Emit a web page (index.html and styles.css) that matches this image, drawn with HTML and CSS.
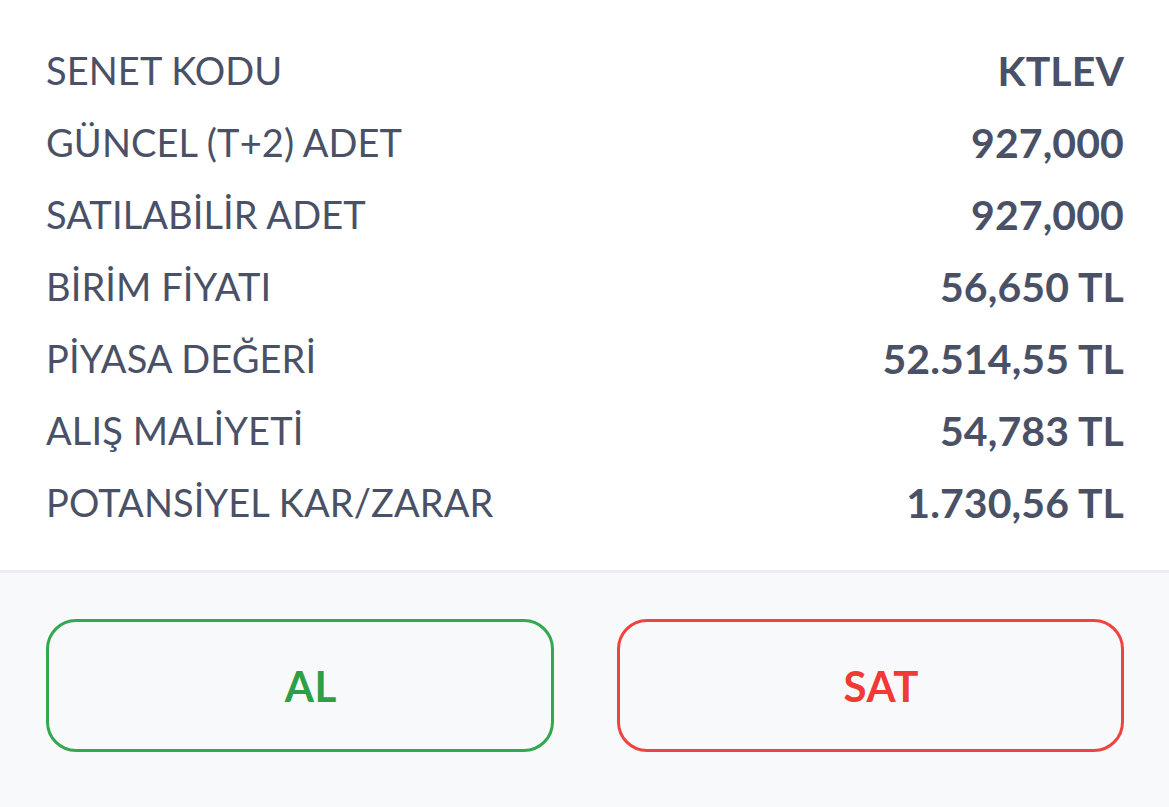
FILE: index.html
```html
<!DOCTYPE html>
<html lang="tr">
<head>
<meta charset="utf-8">
<link rel="stylesheet" href="styles.css">
</head>
<body>
<div class="page">
  <section class="details">
    <div class="row"><span class="label">SENET KODU</span><span class="value">KTLEV</span></div>
    <div class="row"><span class="label">GÜNCEL (T+2) ADET</span><span class="value">927,000</span></div>
    <div class="row"><span class="label">SATILABİLİR ADET</span><span class="value">927,000</span></div>
    <div class="row"><span class="label">BİRİM FİYATI</span><span class="value">56,650 TL</span></div>
    <div class="row"><span class="label">PİYASA DEĞERİ</span><span class="value">52.514,55 TL</span></div>
    <div class="row"><span class="label">ALIŞ MALİYETİ</span><span class="value">54,783 TL</span></div>
    <div class="row"><span class="label">POTANSİYEL KAR/ZARAR</span><span class="value">1.730,56 TL</span></div>
  </section>
  <section class="actions">
    <button class="btn btn-buy">AL</button>
    <button class="btn btn-sell">SAT</button>
  </section>
</div>
</body>
</html>
```

FILE: styles.css
```css
* { box-sizing: border-box; }
html, body { margin: 0; padding: 0; }
body {
  width: 1169px;
  height: 807px;
  overflow: hidden;
  background: #f8f9fb;
  font-family: Lato, "Noto Sans", sans-serif;
  color: #4a5167;
}
.page { display: flex; flex-direction: column; height: 807px; }
.details {
  background: #ffffff;
  padding: 34px 45px 32px 46px;
  border-bottom: 3px solid #ebedf0;
}
.row {
  display: flex;
  justify-content: space-between;
  align-items: center;
  height: 72px;
}
.label {
  font-size: 38px;
  font-weight: 400;
  letter-spacing: 0.1px;
}
.value {
  font-size: 41px;
  font-weight: 700;
  letter-spacing: 0.1px;
}
.actions {
  flex: 1;
  display: flex;
  gap: 63px;
  padding: 46px 45px 0 46px;
  align-items: flex-start;
}
.btn {
  flex: 1;
  height: 133px;
  padding: 0 0 0 22px;
  background: transparent;
  border-radius: 30px;
  border: 3px solid;
  font-family: inherit;
  font-size: 42px;
  font-weight: 700;
  letter-spacing: 0.5px;
  cursor: pointer;
}
.btn-buy { border-color: #33a84f; color: #2e9f45; }
.btn-sell { border-color: #ee4440; color: #ef3a35; }
```
